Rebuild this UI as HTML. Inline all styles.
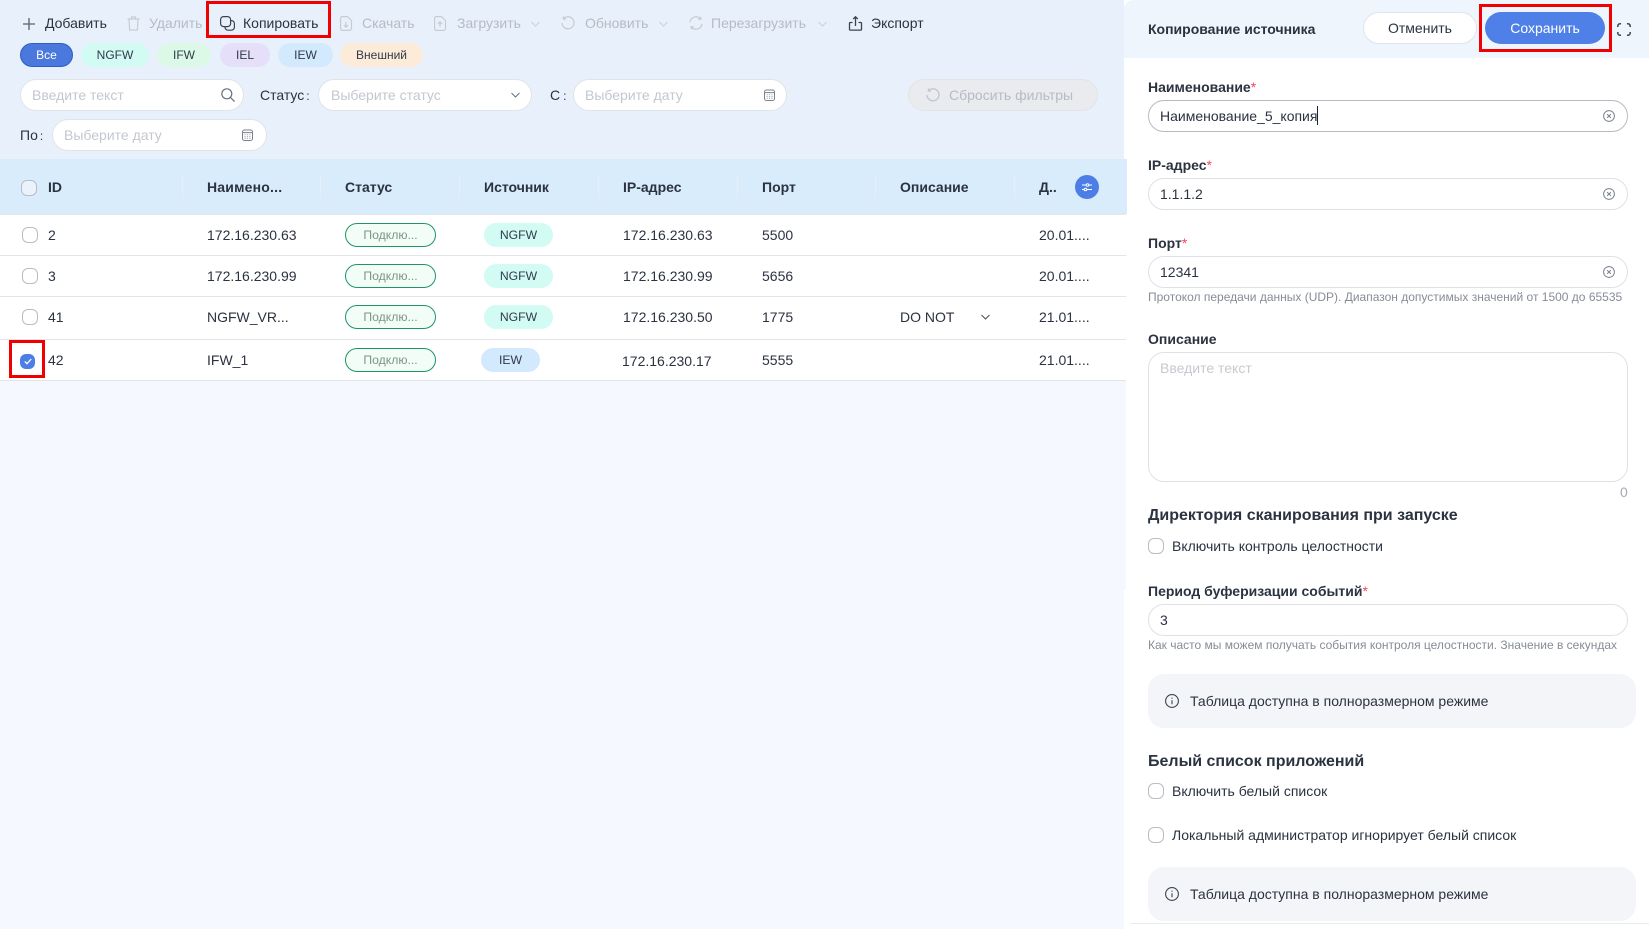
<!DOCTYPE html>
<html lang="ru">
<head>
<meta charset="utf-8">
<title>Копирование источника</title>
<style>
html,body{margin:0;padding:0;width:1649px;height:929px;overflow:hidden;background:#fff}
body{position:relative;font-family:"Liberation Sans",Arial,sans-serif;font-size:14px;color:#2b3240}
.a{position:absolute;box-sizing:border-box}
.t{position:absolute;white-space:nowrap;line-height:20px;height:20px}
.b{font-weight:bold}
.d{color:#b6bbc4}
.p{color:#c3c7ce}
svg{position:absolute;display:block;overflow:visible;fill:none}
.pill{position:absolute;box-sizing:border-box;height:24px;top:43px;border-radius:12px;text-align:center;line-height:25px;font-size:12px;color:#2f3a4a}
.inp{position:absolute;box-sizing:border-box;background:#fff;border:1px solid #e0e3e8;border-radius:16px;height:32px}
.sep{position:absolute;width:1px;top:176px;height:22px;background:#e6eff8}
.cb{position:absolute;box-sizing:border-box;width:16px;height:16px;border:1px solid #b9bdc6;border-radius:6px;background:#fff}
.st{position:absolute;box-sizing:border-box;left:345px;width:91px;height:24px;border:1px solid #1f9467;border-radius:12px;background:#f3fdf7;color:#7c9486;font-size:12.2px;line-height:22px;text-align:center}
.src{position:absolute;box-sizing:border-box;height:24px;border-radius:12px;text-align:center;line-height:24px;font-size:12.2px;color:#2f3a4a}
.ln{position:absolute;left:0;width:1126px;height:1px;background:#e2e4e8}
.red{position:absolute;box-sizing:border-box;border:3px solid #f00000}
.lab{position:absolute;white-space:nowrap;line-height:20px;height:20px;font-weight:bold;left:1148px;color:#2b3240}
.lab i{color:#f5455c;font-style:normal;font-weight:normal}
.fi{position:absolute;box-sizing:border-box;left:1148px;width:480px;height:32px;background:#fff;border:1px solid #dfe1e6;border-radius:16px}
.hint{position:absolute;left:1148px;white-space:nowrap;font-size:12px;line-height:16px;color:#868c96}
.box{position:absolute;box-sizing:border-box;left:1148px;width:488px;height:54px;background:#f4f5f9;border-radius:16px}
.sec{position:absolute;left:1148px;white-space:nowrap;font-size:16px;font-weight:bold;line-height:22px;color:#2b3240}
</style>
</head>
<body>
<!-- side panel base -->
<div class="a" style="left:1124px;top:0;width:525px;height:929px;background:#fff;border-top-left-radius:10px"></div>
<div class="a" style="left:1124px;top:0;width:525px;height:58px;background:#eef5fd;border-top-left-radius:10px"></div>

<!-- background -->
<div class="a" style="left:0;top:0;width:1124px;height:159px;background:#e8f1fb"></div>
<div class="a" style="left:0;top:380px;width:1126px;height:210px;background:#f5f8fe"></div>
<div class="a" style="left:0;top:590px;width:1124px;height:339px;background:#f5f8fe"></div>

<!-- toolbar -->
<svg style="left:23px;top:18px" width="12" height="12" viewBox="0 0 12 12" stroke="#5a6170" stroke-width="1.3"><path d="M6 0v12M0 6h12"/></svg>
<div class="t" style="left:45px;top:13px">Добавить</div>
<svg style="left:127px;top:16px" width="13" height="15" viewBox="0 0 13 15" stroke="#c8ccd2" stroke-width="1.2"><path d="M0.5 3h12M4.500 3V1h4v2M2 3l.6 11h7.800L11 3"/></svg>
<div class="t d" style="left:149px;top:13px">Удалить</div>
<svg style="left:220px;top:16px" width="15" height="15" viewBox="0 0 15 15" stroke="#3b4250" stroke-width="1.2"><rect x="0.6" y="0.6" width="10" height="10" rx="3"/><path d="M11 4.600h0.400a3 3 0 0 1 3 3v3.600a3 3 0 0 1-3 3H8a3 3 0 0 1-3-3V11"/></svg>
<div class="t" style="left:243px;top:13px">Копировать</div>
<svg style="left:340px;top:16px" width="12" height="15" viewBox="0 0 12 15" stroke="#c8ccd2" stroke-width="1.2"><path d="M1.500 .6h6l4 4v8a1.800 1.800 0 0 1-1.800 1.800H2.300A1.800 1.800 0 0 1 .6 12.600V2.400A1.800 1.800 0 0 1 1.500 .6zM6 6v5M4 9.200l2 2 2-2"/></svg>
<div class="t d" style="left:362px;top:13px">Скачать</div>
<svg style="left:434px;top:16px" width="12" height="15" viewBox="0 0 12 15" stroke="#c8ccd2" stroke-width="1.2"><path d="M1.500 .6h6l4 4v8a1.800 1.800 0 0 1-1.800 1.800H2.300A1.800 1.800 0 0 1 .6 12.600V2.400A1.800 1.800 0 0 1 1.500 .6zM6 11V6M4 7.800l2-2 2 2"/></svg>
<div class="t d" style="left:457px;top:13px">Загрузить</div>
<svg style="left:531px;top:21px" width="9" height="6" viewBox="0 0 9 6" stroke="#cdd1d7" stroke-width="1"><path d="M.5 1l4 4 4-4"/></svg>
<svg style="left:561px;top:16px" width="14" height="14" viewBox="0 0 14 14" stroke="#c8ccd2" stroke-width="1.3"><path d="M2.700 2.600A6 6 0 1 1 1 7M2.400 .4v2.600h2.600"/></svg>
<div class="t d" style="left:585px;top:13px">Обновить</div>
<svg style="left:659px;top:21px" width="9" height="6" viewBox="0 0 9 6" stroke="#cdd1d7" stroke-width="1"><path d="M.5 1l4 4 4-4"/></svg>
<svg style="left:689px;top:16px" width="14" height="14" viewBox="0 0 14 14" stroke="#c8ccd2" stroke-width="1.3"><path d="M1 6.200A6 6 0 0 1 11.600 3M13 7.800A6 6 0 0 1 2.400 11M11.800 .6V3.200H9.200M2.200 13.400V10.800h2.600"/></svg>
<div class="t d" style="left:711px;top:13px">Перезагрузить</div>
<svg style="left:818px;top:21px" width="9" height="6" viewBox="0 0 9 6" stroke="#cdd1d7" stroke-width="1"><path d="M.5 1l4 4 4-4"/></svg>
<svg style="left:849px;top:16px" width="13" height="15" viewBox="0 0 13 15" stroke="#3b4250" stroke-width="1.300"><path d="M3.500 6.500H1.300a.8.800 0 0 0-.8.800v6a.8.800 0 0 0 .8.800h10.400a.8.800 0 0 0 .8-.8v-6a.8.800 0 0 0-.8-.8H9.500M6.500 10V.8M4.200 3L6.500 .8 8.800 3"/></svg>
<div class="t" style="left:871px;top:13px">Экспорт</div>
<div class="red" style="left:206px;top:1px;width:125px;height:37px"></div>

<!-- pills -->
<div class="pill" style="left:20px;width:53px;background:#4a78dc;border:1px solid #2f5ec2;color:#fff;line-height:23px">Все</div>
<div class="pill" style="left:81px;width:68px;background:#d2fbf3">NGFW</div>
<div class="pill" style="left:157px;width:54px;background:#dcf9e8">IFW</div>
<div class="pill" style="left:220px;width:50px;background:#e5dffa">IEL</div>
<div class="pill" style="left:278px;width:55px;background:#d3e9fd">IEW</div>
<div class="pill" style="left:340px;width:83px;background:#fdebd9">Внешний</div>

<!-- filters -->
<div class="inp" style="left:20px;top:79px;width:224px"></div>
<div class="t p" style="left:32px;top:85px">Введите текст</div>
<svg style="left:221px;top:88px" width="14" height="14" viewBox="0 0 14 14" stroke="#6a717d" stroke-width="1.200"><circle cx="5.800" cy="5.800" r="5"/><path d="M9.400 9.400l4.200 4.200"/></svg>
<div class="t" style="left:260px;top:85px">Статус<span style="margin-left:2px;font-size:12px">:</span></div>
<div class="inp" style="left:318px;top:79px;width:214px"></div>
<div class="t p" style="left:331px;top:85px">Выберите статус</div>
<svg style="left:511px;top:92px" width="9" height="6" viewBox="0 0 9 6" stroke="#6a717d" stroke-width="1"><path d="M.5 1l4 4 4-4"/></svg>
<div class="t" style="left:550px;top:85px">С<span style="margin-left:3px;font-size:12px">:</span></div>
<div class="inp" style="left:573px;top:79px;width:214px"></div>
<div class="t p" style="left:585px;top:85px">Выберите дату</div>
<svg style="left:764px;top:89px" width="11" height="12" viewBox="0 0 11 12" stroke="#7b818c" stroke-width="1"><rect x=".5" y="1" width="10" height="10.500" rx="2"/><path d="M.5 3.600h10"/><path d="M2.500 5.800h6M2.500 7.600h6M2.500 9.400h6" stroke="#a4a9b1" stroke-dasharray="1.200 1.200"/></svg>
<div class="t" style="left:20px;top:125px">По<span style="margin-left:2px;font-size:12px">:</span></div>
<div class="inp" style="left:52px;top:119px;width:215px"></div>
<div class="t p" style="left:64px;top:125px">Выберите дату</div>
<svg style="left:242px;top:129px" width="11" height="12" viewBox="0 0 11 12" stroke="#7b818c" stroke-width="1"><rect x=".5" y="1" width="10" height="10.500" rx="2"/><path d="M.5 3.600h10"/><path d="M2.500 5.800h6M2.500 7.600h6M2.500 9.400h6" stroke="#a4a9b1" stroke-dasharray="1.200 1.200"/></svg>
<div class="a" style="left:908px;top:79px;width:190px;height:32px;background:#e9ebee;border:1px solid #e2e4e8;border-radius:16px"></div>
<svg style="left:926px;top:88px" width="14" height="14" viewBox="0 0 14 14" stroke="#c1c5cc" stroke-width="1.300"><path d="M2.700 2.600A6 6 0 1 1 1 7M2.400 .4v2.600h2.600"/></svg>
<div class="t d" style="left:949px;top:85px">Сбросить фильтры</div>

<!-- table header -->
<div class="a" style="left:0;top:159px;width:1127px;height:55px;background:#d9ecfb"></div>
<div class="ln" style="top:214px;background:#e3e6ea"></div>
<div class="sep" style="left:182px"></div><div class="sep" style="left:320px"></div><div class="sep" style="left:459px"></div><div class="sep" style="left:598px"></div><div class="sep" style="left:737px"></div><div class="sep" style="left:875px"></div><div class="sep" style="left:1014px"></div>
<div class="cb" style="left:21px;top:180px;background:#eaf3fb"></div>
<div class="t b" style="left:48px;top:177px">ID</div>
<div class="t b" style="left:207px;top:177px;letter-spacing:.2px">Наимено...</div>
<div class="t b" style="left:345px;top:177px">Статус</div>
<div class="t b" style="left:484px;top:177px">Источник</div>
<div class="t b" style="left:623px;top:177px">IP-адрес</div>
<div class="t b" style="left:762px;top:177px">Порт</div>
<div class="t b" style="left:900px;top:177px">Описание</div>
<div class="t b" style="left:1039px;top:177px">Д..</div>
<div class="a" style="left:1075px;top:175px;width:24px;height:24px;border-radius:50%;background:#4c7ee6"></div>
<svg style="left:1081px;top:182px" width="12" height="10" viewBox="0 0 12 10" stroke="#fff" stroke-width="1"><path d="M1 3h4M8 3h3M1 7.500h2M6 7.500h5"/><circle cx="6.500" cy="3" r="1.300"/><circle cx="4.500" cy="7.500" r="1.300"/></svg>

<!-- rows -->
<div class="ln" style="top:255px"></div>
<div class="ln" style="top:296px"></div>
<div class="ln" style="top:339px"></div>
<div class="ln" style="top:380px"></div>

<div class="cb" style="left:22px;top:227px"></div>
<div class="t" style="left:48px;top:225px">2</div>
<div class="t" style="left:207px;top:225px">172.16.230.63</div>
<div class="st" style="top:223px">Подклю...</div>
<div class="src" style="left:484px;top:223px;width:69px;background:#d2fbf3">NGFW</div>
<div class="t" style="left:623px;top:225px">172.16.230.63</div>
<div class="t" style="left:762px;top:225px">5500</div>
<div class="t" style="left:1039px;top:225px">20.01....</div>

<div class="cb" style="left:22px;top:268px"></div>
<div class="t" style="left:48px;top:266px">3</div>
<div class="t" style="left:207px;top:266px">172.16.230.99</div>
<div class="st" style="top:264px">Подклю...</div>
<div class="src" style="left:484px;top:264px;width:69px;background:#d2fbf3">NGFW</div>
<div class="t" style="left:623px;top:266px">172.16.230.99</div>
<div class="t" style="left:762px;top:266px">5656</div>
<div class="t" style="left:1039px;top:266px">20.01....</div>

<div class="cb" style="left:22px;top:309px"></div>
<div class="t" style="left:48px;top:307px">41</div>
<div class="t" style="left:207px;top:307px">NGFW_VR...</div>
<div class="st" style="top:305px">Подклю...</div>
<div class="src" style="left:484px;top:305px;width:69px;background:#d2fbf3">NGFW</div>
<div class="t" style="left:623px;top:307px">172.16.230.50</div>
<div class="t" style="left:762px;top:307px">1775</div>
<div class="t" style="left:900px;top:307px">DO NOT</div>
<svg style="left:981px;top:314px" width="9" height="6" viewBox="0 0 9 6" stroke="#4a5160" stroke-width="1.100"><path d="M.5 1l4 4 4-4"/></svg>
<div class="t" style="left:1039px;top:307px">21.01....</div>

<div class="a" style="left:20px;top:354px;width:15px;height:15px;border-radius:6px;background:#4c7ee6"></div>
<svg style="left:24px;top:358px" width="8" height="7" viewBox="0 0 8 7" stroke="#fff" stroke-width="1.300"><path d="M.8 3.500l2.200 2.200L7.200 1"/></svg>
<div class="red" style="left:9px;top:340px;width:36px;height:38px"></div>
<div class="t" style="left:48px;top:350px">42</div>
<div class="t" style="left:207px;top:350px">IFW_1</div>
<div class="st" style="top:348px">Подклю...</div>
<div class="src" style="left:481px;top:348px;width:59px;background:#d3e9fd">IEW</div>
<div class="t" style="left:622px;top:351px">172.16.230.17</div>
<div class="t" style="left:762px;top:350px">5555</div>
<div class="t" style="left:1039px;top:350px">21.01....</div>

<!-- side panel content -->
<div class="t b" style="left:1148px;top:19px">Копирование источника</div>
<div class="a" style="left:1363px;top:12px;width:114px;height:32px;background:#fff;border:1px solid #e2e5ea;border-radius:16px;text-align:center;line-height:31px">Отменить</div>
<div class="a" style="left:1485px;top:12px;width:120px;height:32px;background:#4f80e8;border-radius:16px;text-align:center;line-height:32px;color:#fff">Сохранить</div>
<div class="red" style="left:1479px;top:4px;width:133px;height:48px"></div>
<svg style="left:1617px;top:23px" width="14" height="13" viewBox="0 0 14 13" stroke="#3b4250" stroke-width="1.500"><path d="M.8 4V3A2.200 2.200 0 0 1 3 .8h1M10 .8h1A2.200 2.200 0 0 1 13.200 3v1M13.200 9v1a2.200 2.200 0 0 1-2.200 2.200h-1M4 12.200H3A2.200 2.200 0 0 1 .8 10V9"/></svg>

<div class="lab" style="top:77px">Наименование<i>*</i></div>
<div class="fi" style="top:100px;border-color:#b6bbc4"></div>
<div class="t" style="left:1160px;top:106px">Наименование_5_копия</div>
<div class="a" style="left:1317px;top:106px;width:1px;height:19px;background:#1d2430"></div>
<svg style="left:1603px;top:110px" width="12" height="12" viewBox="0 0 12 12" stroke="#7b818c" stroke-width="1"><circle cx="6" cy="6" r="5.400"/><path d="M4.100 4.100l3.800 3.800M7.900 4.100l-3.800 3.800"/></svg>

<div class="lab" style="top:155px">IP-адрес<i>*</i></div>
<div class="fi" style="top:178px"></div>
<div class="t" style="left:1160px;top:184px">1.1.1.2</div>
<svg style="left:1603px;top:188px" width="12" height="12" viewBox="0 0 12 12" stroke="#7b818c" stroke-width="1"><circle cx="6" cy="6" r="5.400"/><path d="M4.100 4.100l3.800 3.800M7.900 4.100l-3.800 3.800"/></svg>

<div class="lab" style="top:233px">Порт<i>*</i></div>
<div class="fi" style="top:256px"></div>
<div class="t" style="left:1160px;top:262px">12341</div>
<svg style="left:1603px;top:266px" width="12" height="12" viewBox="0 0 12 12" stroke="#7b818c" stroke-width="1"><circle cx="6" cy="6" r="5.400"/><path d="M4.100 4.100l3.800 3.800M7.900 4.100l-3.800 3.800"/></svg>
<div class="hint" style="top:289px">Протокол передачи данных (UDP). Диапазон допустимых значений от 1500 до 65535</div>

<div class="lab" style="top:329px">Описание</div>
<div class="fi" style="top:352px;height:130px"></div>
<div class="t" style="left:1160px;top:358px;color:#c6cad0">Введите текст</div>
<div class="t" style="left:1620px;top:482px;color:#a5a9b1">0</div>

<div class="sec" style="top:505px">Директория сканирования при запуске</div>
<div class="cb" style="left:1148px;top:538px"></div>
<div class="t" style="left:1172px;top:536px">Включить контроль целостности</div>

<div class="lab" style="top:581px">Период буферизации событий<i>*</i></div>
<div class="fi" style="top:604px"></div>
<div class="t" style="left:1160px;top:610px">3</div>
<div class="hint" style="top:637px">Как часто мы можем получать события контроля целостности. Значение в секундах</div>

<div class="box" style="top:674px"></div>
<svg style="left:1165px;top:694px" width="14" height="14" viewBox="0 0 14 14" stroke="#3b4250" stroke-width="1.100"><circle cx="7" cy="7" r="6.400"/><path d="M7 6.200v4M7 3.600v1.200"/></svg>
<div class="t" style="left:1190px;top:691px">Таблица доступна в полноразмерном режиме</div>

<div class="sec" style="top:751px">Белый список приложений</div>
<div class="cb" style="left:1148px;top:783px"></div>
<div class="t" style="left:1172px;top:781px">Включить белый список</div>
<div class="cb" style="left:1148px;top:827px"></div>
<div class="t" style="left:1172px;top:825px">Локальный администратор игнорирует белый список</div>

<div class="box" style="top:867px"></div>
<svg style="left:1165px;top:887px" width="14" height="14" viewBox="0 0 14 14" stroke="#3b4250" stroke-width="1.100"><circle cx="7" cy="7" r="6.400"/><path d="M7 6.200v4M7 3.600v1.200"/></svg>
<div class="t" style="left:1190px;top:884px">Таблица доступна в полноразмерном режиме</div>
<div class="a" style="left:1130px;top:923px;width:519px;height:1px;background:#e8eaee"></div>
</body>
</html>
